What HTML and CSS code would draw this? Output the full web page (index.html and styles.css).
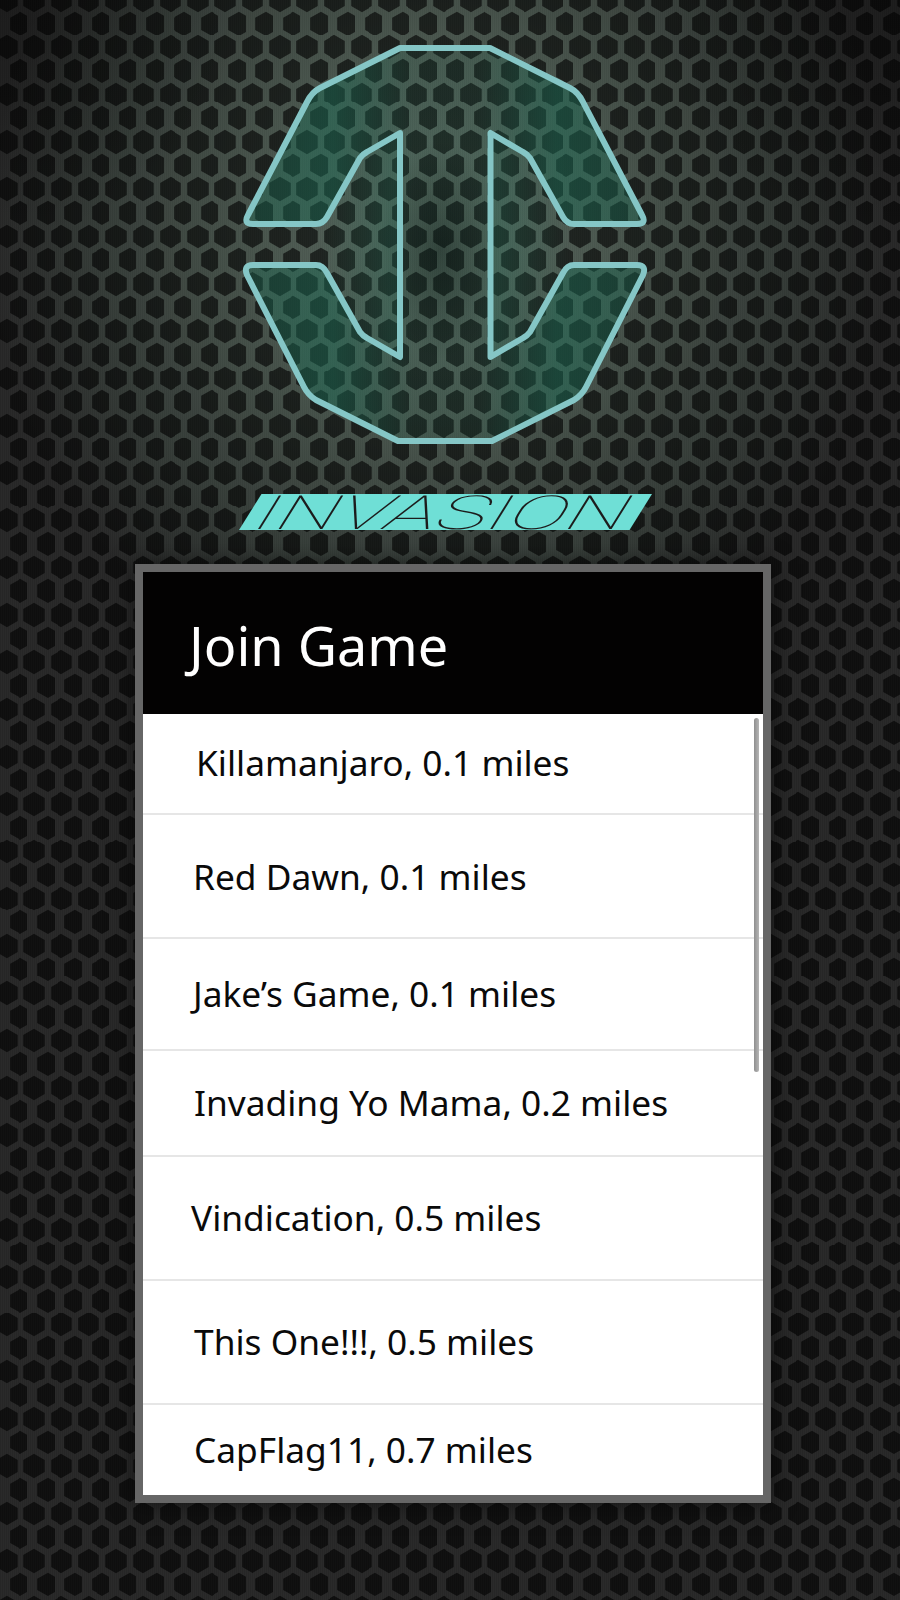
FILE: index.html
```html
<!DOCTYPE html>
<html lang="en">
<head>
<meta charset="utf-8">
<title>Invasion - Join Game</title>
<link rel="stylesheet" href="styles.css">
</head>
<body>
<main class="screen">
  <svg class="logo" viewBox="0 0 450 440" width="450" height="440" aria-label="Invasion emblem">
    <defs>
      <linearGradient id="logoFill" x1="0" y1="0" x2="1" y2="0">
        <stop offset="0" stop-color="#1a6b55" stop-opacity=".38"/>
        <stop offset=".22" stop-color="#1a6b55" stop-opacity=".48"/>
        <stop offset=".42" stop-color="#1a6b55" stop-opacity=".12"/>
        <stop offset=".58" stop-color="#1a6b55" stop-opacity=".12"/>
        <stop offset=".78" stop-color="#1a6b55" stop-opacity=".48"/>
        <stop offset="1" stop-color="#1a6b55" stop-opacity=".38"/>
      </linearGradient>
      <linearGradient id="notchLeft" x1="1" y1="0" x2="0" y2="0">
        <stop offset="0" stop-color="#1a6b55" stop-opacity=".32"/>
        <stop offset="1" stop-color="#1a6b55" stop-opacity="0"/>
      </linearGradient>
      <linearGradient id="notchRight" x1="0" y1="0" x2="1" y2="0">
        <stop offset="0" stop-color="#1a6b55" stop-opacity=".32"/>
        <stop offset="1" stop-color="#1a6b55" stop-opacity="0"/>
      </linearGradient>
    </defs>
    <path fill="url(#notchLeft)" d="M103 204 L143 135 L180 112 V338 L140 315 L100 245 Z"/>
    <path fill="url(#notchRight)" d="M347 204 L307 135 L270.500 112 V338 L310 315 L350 245 Z"/>
    <path class="logo-shape" fill="url(#logoFill)" d="M180 28 H270 L350 68 Q358 72 363 82 L422 195 Q427 204 417 204 H354 Q347 204 343 197 L310 138 Q307 134 303 132 L270.500 113 V337 L303 318 Q307 316 310 312 L343 253 Q347 245 354 245 H417 Q427 245 423 255 L366 367 Q362 375 354 380 L272 421 H178 L96 380 Q88 375 84 367 L27 255 Q23 245 33 245 H96 Q103 245 107 253 L140 312 Q143 316 147 318 L180 337 V113 L147 132 Q143 134 140 138 L107 197 Q103 204 96 204 H33 Q23 204 28 195 L87 82 Q92 72 100 68 Z"/>
  </svg>
  <svg class="wordmark" viewBox="0 0 436 68" width="436" height="68">
    <polygon class="wordmark-band" points="7,52 29.500,16 420,16 397.500,52"/>
    <text class="wordmark-text" x="0" y="0" textLength="372" lengthAdjust="spacingAndGlyphs" transform="translate(16 51) skewX(-32)">INVASION</text>
  </svg>
  <section class="panel">
    <h1 class="panel-title">Join Game</h1>
    <ul class="game-list">
      <li class="game game-1">Killamanjaro, 0.1 miles</li>
      <li class="game game-2">Red Dawn, 0.1 miles</li>
      <li class="game game-3">Jake’s Game, 0.1 miles</li>
      <li class="game game-4">Invading Yo Mama, 0.2 miles</li>
      <li class="game game-5">Vindication, 0.5 miles</li>
      <li class="game game-6">This One!!!, 0.5 miles</li>
      <li class="game game-7">CapFlag11, 0.7 miles</li>
    </ul>
    <div class="scrollbar"></div>
  </section>
</main>
</body>
</html>
```
FILE: styles.css
```css
* { box-sizing: border-box; }
html, body { margin: 0; padding: 0; background: #111; }
.screen {
  width: 900px;
  height: 1600px;
  overflow: hidden;
  display: flex;
  flex-direction: column;
  align-items: flex-start;
  padding-top: 20px;
  background-color: #282828;
  background-image:
    radial-gradient(ellipse 60px 110px at 440px 250px, rgba(0,0,0,.4), rgba(0,0,0,0)),
    radial-gradient(circle 240px at 0 0, rgba(0,0,0,.3), rgba(0,0,0,0)),
    radial-gradient(circle 240px at 900px 0, rgba(0,0,0,.3), rgba(0,0,0,0)),
    repeating-linear-gradient(90deg, rgba(0,0,0,.04) 0 1px, rgba(255,255,255,.006) 1px 2px),
    url("data:image/svg+xml,%3Csvg xmlns='http://www.w3.org/2000/svg' viewBox='0 0 273 473'%3E%3Cg fill='%23000' fill-opacity='.62'%3E%3Cpath d='M68 0l105 60v120l-105 60-105-60V60z' transform='translate(0 -130)'/%3E%3Cpath d='M68 0l105 60v120l-105 60-105-60V60z' transform='translate(273 -130)'/%3E%3Cpath d='M68 0l105 60v120l-105 60-105-60V60z' transform='translate(0 343)'/%3E%3Cpath d='M68 0l105 60v120l-105 60-105-60V60z' transform='translate(273 343)'/%3E%3Cpath d='M68 0l105 60v120l-105 60-105-60V60z' transform='translate(136 106)'/%3E%3C/g%3E%3C/svg%3E"),
    radial-gradient(ellipse 450px 480px at 440px 230px, #5a6a60 0%, #4a564e 40%, #38403b 70%, #282828 100%);
  background-size: 100% 100%, 100% 100%, 100% 100%, 2px 2px, 27.3px 47.3px, 100% 100%;
  background-position: 0 0, 0 0, 0 0, 0 0, 0 1px, 0 0;
  background-repeat: no-repeat, no-repeat, no-repeat, repeat, repeat, no-repeat;
}
.logo { display: block; margin-left: 220px; flex: none; }
.logo-shape { stroke: #85c6c6; stroke-width: 6px; stroke-linejoin: round; }
.wordmark { display: block; margin: 18px 0 0 232px; flex: none; }
.wordmark-band { fill: #6fdfd6; }
.wordmark-text {
  font-family: "Roboto", sans-serif;
  font-weight: 100;
  font-size: 47px;
  fill: #1c1c1c;
}
.panel {
  position: relative;
  flex: none;
  width: 636px;
  height: 939px;
  margin: 18px 0 0 135px;
  border: 8px solid #666;
  background: #fff;
  box-shadow: 0 0 22px rgba(0,0,0,.55);
  display: flex;
  flex-direction: column;
  overflow: hidden;
  font-family: "Noto Sans", "Open Sans", sans-serif;
}
.panel-title {
  margin: 0;
  flex: none;
  height: 142px;
  display: flex;
  align-items: center;
  padding: 4px 0 0 46px;
  background: #030202;
  color: #fff;
  font-size: 54px;
  font-weight: 400;
}
.game-list {
  list-style: none;
  margin: 0;
  padding: 0;
  flex: 1;
  display: flex;
  flex-direction: column;
}
.game {
  display: flex;
  align-items: center;
  flex: none;
  color: #0a0a0a;
  font-size: 35.3px;
  border-bottom: 2px solid #e6e6e6;
  padding-bottom: 3px;
}
.game-1 { height: 101px; padding-left: 53px; }
.game-2 { height: 124px; padding-left: 50px; padding-top: 3px; }
.game-3 { height: 112px; padding-left: 50px; }
.game-4 { height: 106px; padding-left: 51px; }
.game-5 { height: 124px; padding-left: 48px; }
.game-6 { height: 124px; padding-left: 51px; }
.game-7 { flex: 1; padding-left: 51px; border-bottom: 0; }
.scrollbar {
  position: absolute;
  right: 4px;
  top: 146px;
  width: 5px;
  height: 354px;
  border-radius: 3px;
  background: linear-gradient(90deg, #8f8f8f, #b5b5b5);
}
```
